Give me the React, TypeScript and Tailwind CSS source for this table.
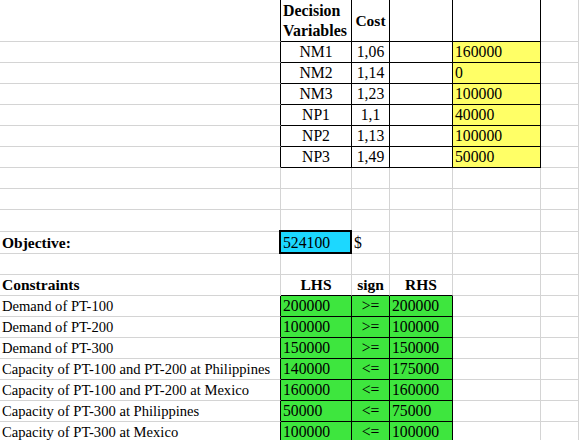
import type { ReactNode } from "react"

type CellProps = {
  children?: ReactNode
  r?: boolean
  b?: boolean
  bg?: string
  center?: boolean
  mid?: boolean
  bold?: boolean
  className?: string
}

function Cell({ children, r, b, bg = "", center, mid, bold, className = "" }: CellProps) {
  return (
    <div
      className={`relative flex border-r border-b whitespace-nowrap leading-[20px] ${
        r ? "border-r-black" : "border-r-[#d4d4d4]"
      } ${b ? "border-b-black" : "border-b-[#d4d4d4]"} ${center ? "justify-center" : "pl-[2px]"} ${
        mid ? "items-center" : "items-end"
      } ${bold ? "font-bold text-[15.5px]" : ""} ${bg} ${className}`}
    >
      {children}
    </div>
  )
}

function Row({ h = "h-[21px]", children }: { h?: string; children: ReactNode }) {
  return <div className={`grid grid-cols-[281px_71px_38px_63px_88px_1fr] ${h}`}>{children}</div>
}

const variables = [
  ["NM1", "1,06", "160000"],
  ["NM2", "1,14", "0"],
  ["NM3", "1,23", "100000"],
  ["NP1", "1,1", "40000"],
  ["NP2", "1,13", "100000"],
  ["NP3", "1,49", "50000"],
]

const constraints = [
  ["Demand of PT-100", "200000", ">=", "200000"],
  ["Demand of PT-200", "100000", ">=", "100000"],
  ["Demand of PT-300", "150000", ">=", "150000"],
  ["Capacity of PT-100 and PT-200 at Philippines", "140000", "<=", "175000"],
  ["Capacity of PT-100 and PT-200 at Mexico", "160000", "<=", "160000"],
  ["Capacity of PT-300 at Philippines", "50000", "<=", "75000"],
  ["Capacity of PT-300 at Mexico", "100000", "<=", "100000"],
]

function Empty({ h }: { h?: string }) {
  return (
    <Row h={h}>
      <Cell />
      <Cell />
      <Cell />
      <Cell />
      <Cell />
      <Cell />
    </Row>
  )
}

export default function App() {
  return (
    <div className="w-[579px] h-[440px] overflow-hidden bg-white font-['Liberation_Serif',serif] text-[15.7px] text-black">
      {/* decision variables table */}
      <Row h="h-[42px]">
        <Cell r />
        <Cell r b bold className="pl-[1px] text-[15.9px]">
          <div>
            Decision
            <br />
            Variables
          </div>
        </Cell>
        <Cell r b bold center mid>
          Cost
        </Cell>
        <Cell r b />
        <Cell r b />
        <Cell />
      </Row>
      {variables.map(([name, cost, value]) => (
        <Row key={name}>
          <Cell r />
          <Cell r b center>
            {name}
          </Cell>
          <Cell r b center>
            {cost}
          </Cell>
          <Cell r b />
          <Cell r b bg="bg-[#ffff66]">
            {value}
          </Cell>
          <Cell />
        </Row>
      ))}

      <Empty />
      <Empty />
      <Empty h="h-[22px]" />

      {/* objective */}
      <Row h="h-[22px]">
        <Cell bold>Objective:</Cell>
        <Cell bg="bg-[#1cd8ff]" className="pl-[1px]">
          524100
          <div className="absolute -left-[2px] -top-[2px] -right-[1px] -bottom-[1px] border-2 border-black" />
        </Cell>
        <Cell>$</Cell>
        <Cell />
        <Cell />
        <Cell />
      </Row>

      <Empty />

      {/* constraints */}
      <Row>
        <Cell bold>Constraints</Cell>
        <Cell b bold center>
          LHS
        </Cell>
        <Cell b bold center>
          sign
        </Cell>
        <Cell b bold center>
          RHS
        </Cell>
        <Cell />
        <Cell />
      </Row>
      {constraints.map(([label, lhs, sign, rhs]) => (
        <Row key={label}>
          <Cell r className="text-[14.6px]">
            {label}
          </Cell>
          <Cell r b bg="bg-[#3ee63e]">
            {lhs}
          </Cell>
          <Cell r b center bg="bg-[#3ee63e]">
            {sign}
          </Cell>
          <Cell r b bg="bg-[#3ee63e]">
            {rhs}
          </Cell>
          <Cell />
          <Cell />
        </Row>
      ))}
    </div>
  )
}
